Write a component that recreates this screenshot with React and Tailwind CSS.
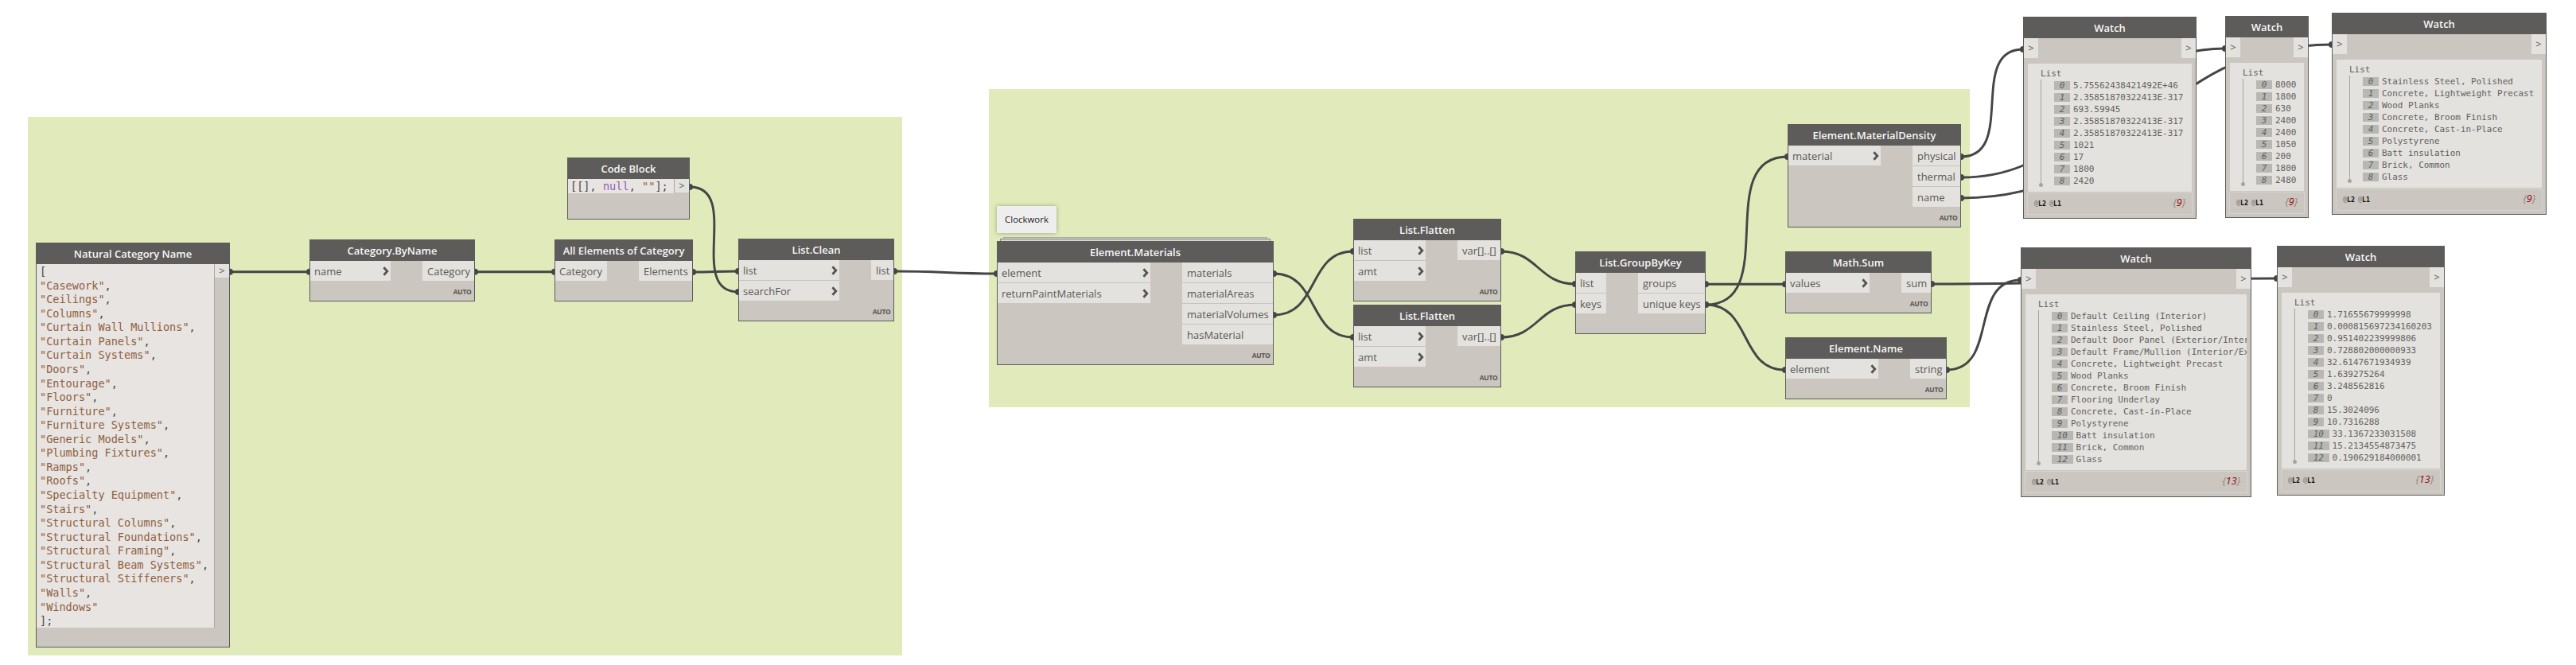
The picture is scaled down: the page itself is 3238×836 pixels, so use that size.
import React from "react";

const categories = [
  "Casework", "Ceilings", "Columns", "Curtain Wall Mullions", "Curtain Panels", "Curtain Systems",
  "Doors", "Entourage", "Floors", "Furniture", "Furniture Systems", "Generic Models",
  "Plumbing Fixtures", "Ramps", "Roofs", "Specialty Equipment", "Stairs", "Structural Columns",
  "Structural Foundations", "Structural Framing", "Structural Beam Systems",
  "Structural Stiffeners", "Walls", "Windows",
];

// x1, y1 (output port) -> x2, y2 (input port)
const wires = [
  [289, 341.8, 389, 341.8],
  [597, 341.8, 697, 341.8],
  [871, 342, 928, 341],
  [867, 235, 928, 367],
  [1124, 341, 1253, 344],
  [1601, 344, 1701, 424],
  [1601, 396, 1701, 316],
  [1887, 316, 1980, 357],
  [1887, 424, 1980, 383],
  [2144, 357.2, 2244, 357.2],
  [2144, 383, 2247, 197],
  [2144, 383, 2244, 465],
  [2465, 197, 2543, 62],
  [2465, 223, 2797, 61],
  [2465, 249, 2931, 56],
  [2428, 357, 2862, 350],
  [2447, 465, 2540, 352],
];

const nodes = [
  { title: "Category.ByName", pos: "left-[389px] top-[301px] w-[208px] h-[78px]", inputs: ["name"], outputs: ["Category"], inW: "w-[101px]", outW: "w-[65px]", chevrons: true, auto: true },
  { title: "All Elements of Category", pos: "left-[697px] top-[301px] w-[174px] h-[78px]", inputs: ["Category"], outputs: ["Elements"], inW: "w-[65px]", outW: "w-[67px]" },
  { title: "List.Clean", pos: "left-[928px] top-[300px] w-[196px] h-[104px]", inputs: ["list", "searchFor"], outputs: ["list"], inW: "w-[126px]", outW: "w-[28px]", chevrons: true, auto: true },
  { title: "Element.Materials", pos: "left-[1253px] top-[303px] w-[348px] h-[156px]", inputs: ["element", "returnPaintMaterials"], outputs: ["materials", "materialAreas", "materialVolumes", "hasMaterial"], inW: "w-[192px]", outW: "w-[114px]", chevrons: true, auto: true },
  { title: "List.Flatten", pos: "left-[1701px] top-[275px] w-[186px] h-[104px]", inputs: ["list", "amt"], outputs: ["var[]..[]"], inW: "w-[90px]", outW: "w-[54px]", chevrons: true, auto: true },
  { title: "List.Flatten", pos: "left-[1701px] top-[383px] w-[186px] h-[104px]", inputs: ["list", "amt"], outputs: ["var[]..[]"], inW: "w-[90px]", outW: "w-[54px]", chevrons: true, auto: true },
  { title: "List.GroupByKey", pos: "left-[1980px] top-[316px] w-[164px] h-[104px]", inputs: ["list", "keys"], outputs: ["groups", "unique keys"], inW: "w-[38px]", outW: "w-[84px]" },
  { title: "Element.MaterialDensity", pos: "left-[2247px] top-[156px] w-[218px] h-[130px]", inputs: ["material"], outputs: ["physical", "thermal", "name"], inW: "w-[116px]", outW: "w-[60px]", chevrons: true, auto: true },
  { title: "Math.Sum", pos: "left-[2244px] top-[316px] w-[184px] h-[78px]", inputs: ["values"], outputs: ["sum"], inW: "w-[105px]", outW: "w-[37px]", chevrons: true, auto: true },
  { title: "Element.Name", pos: "left-[2244px] top-[424px] w-[203px] h-[78px]", inputs: ["element"], outputs: ["string"], inW: "w-[116px]", outW: "w-[45px]", chevrons: true, auto: true },
];

const watches = [
  {
    pos: "left-[2543px] top-[21px] w-[218px]",
    items: ["5.75562438421492E+46", "2.35851870322413E-317", "693.59945", "2.35851870322413E-317", "2.35851870322413E-317", "1021", "17", "1800", "2420"],
  },
  {
    pos: "left-[2797px] top-[20px] w-[105px]",
    items: ["8000", "1800", "630", "2400", "2400", "1050", "200", "1800", "2480"],
  },
  {
    pos: "left-[2931px] top-[16px] w-[270px]",
    items: ["Stainless Steel, Polished", "Concrete, Lightweight Precast", "Wood Planks", "Concrete, Broom Finish", "Concrete, Cast-in-Place", "Polystyrene", "Batt insulation", "Brick, Common", "Glass"],
  },
  {
    pos: "left-[2540px] top-[311px] w-[290px]",
    items: ["Default Ceiling (Interior)", "Stainless Steel, Polished", "Default Door Panel (Exterior/Interior)", "Default Frame/Mullion (Interior/Exterior)", "Concrete, Lightweight Precast", "Wood Planks", "Concrete, Broom Finish", "Flooring Underlay", "Concrete, Cast-in-Place", "Polystyrene", "Batt insulation", "Brick, Common", "Glass"],
  },
  {
    pos: "left-[2862px] top-[309px] w-[211px]",
    items: ["1.71655679999998", "0.000815697234160203", "0.951402239999806", "0.728802000000933", "32.6147671934939", "1.639275264", "3.248562816", "0", "15.3024096", "10.7316288", "33.1367233031508", "15.2134554873475", "0.190629184000001"],
  },
];

function wirePath([x1, y1, x2, y2]) {
  const offset = 0.45 * Math.hypot(x2 - x1, y2 - y1);
  return `M${x1} ${y1} C${x1 + offset} ${y1} ${x2 - offset} ${y2} ${x2} ${y2}`;
}

function Wires() {
  return (
    <svg className="absolute inset-0" width="3238" height="836" fill="none">
      {wires.map((w, i) => (
        <g key={i}>
          <path d={wirePath(w)} stroke="#454545" strokeWidth="2.9" />
          <circle cx={w[0]} cy={w[1]} r="4" fill="#454545" />
          <circle cx={w[2]} cy={w[3]} r="4" fill="#454545" />
        </g>
      ))}
    </svg>
  );
}

function Header({ children }) {
  return (
    <div className="flex h-[26px] shrink-0 items-center justify-center bg-[#5e5c5a] text-[13px] leading-none font-semibold whitespace-nowrap text-[#f7f7f7]">
      {children}
    </div>
  );
}

function Frame({ className, children }) {
  return (
    <div className={`absolute flex flex-col border border-[#5e5c5a] bg-[#cbc6bf] ${className}`}>
      {children}
    </div>
  );
}

function Chevron() {
  return (
    <svg className="mr-0.5 shrink-0" width="8" height="12" viewBox="0 0 8 12" fill="none">
      <path d="M1.4 1.3 L5.8 6 L1.4 10.7" stroke="#555351" strokeWidth="2.8" />
    </svg>
  );
}

function Port({ label, chevron, output }) {
  return (
    <div className={`flex h-[25px] items-center justify-between bg-[#e4e2de] ${output ? "pl-1.5" : "pl-[5px]"}`}>
      <span className="pt-px text-[13px] leading-[19px] whitespace-nowrap text-[#5a5856]">{label}</span>
      {chevron && <Chevron />}
    </div>
  );
}

function Node({ title, pos, inputs, outputs, inW, outW, chevrons, auto }) {
  return (
    <Frame className={pos}>
      <Header>{title}</Header>
      <div className="flex flex-1 items-start justify-between">
        <div className={`flex flex-col gap-px bg-[#c6c4bf] ${inW}`}>
          {inputs.map((p) => <Port key={p} label={p} chevron={chevrons} />)}
        </div>
        <div className={`flex flex-col gap-px bg-[#c6c4bf] ${outW}`}>
          {outputs.map((p) => <Port key={p} label={p} output />)}
        </div>
      </div>
      {auto && (
        <div className="pr-[3.5px] pb-[5px] text-right text-[8.5px] leading-[12px] font-bold tracking-[-0.3px] text-[#575553]">AUTO</div>
      )}
    </Frame>
  );
}

function Arrow() {
  return <span className="text-[13px] leading-none">&gt;</span>;
}

function CodeOutput() {
  return (
    <div className="flex h-[17px] w-[18px] items-center justify-center bg-[#e4e2de] text-[#5a5856]">
      <Arrow />
    </div>
  );
}

function WatchPort() {
  return (
    <div className="flex h-[25px] w-[18px] items-center justify-center bg-[#e4e2de] text-[#5a5856]">
      <Arrow />
    </div>
  );
}

function Watch({ pos, items }) {
  return (
    <Frame className={pos}>
      <Header>Watch</Header>
      <div className="flex justify-between">
        <WatchPort />
        <WatchPort />
      </div>
      <div className="mx-[5px] mt-[7px] overflow-hidden bg-[#e4e2de] pt-[5px] pb-1.5 pl-4 font-['DejaVu_Sans_Mono','Liberation_Mono',monospace] text-[10.96px] leading-[15px] whitespace-nowrap text-[#62605e]">
        <div>List</div>
        <div className="flex">
          <svg className="-ml-0.5 w-[5px] shrink-0" viewBox={`0 0 5 ${items.length * 15}`} height={items.length * 15}>
            <path d={`M2.5 0V${items.length * 15 - 3}`} stroke="#a5a4a1" strokeWidth="1" />
            <circle cx="2.5" cy={items.length * 15 - 2.5} r="2.5" fill="#a5a4a1" />
          </svg>
          <div className="ml-[14px]">
            {items.map((item, i) => (
              <div key={i} className="flex h-[15px] items-center gap-1">
                <span className="h-[11px] bg-[#b8b7b3] px-[6.7px] leading-[12px] italic">{i}</span>
                <span>{item}</span>
              </div>
            ))}
          </div>
        </div>
      </div>
      <div className="mx-1 mt-px mb-1 flex h-[28px] items-center justify-between border border-[#d5d4d1] px-2">
        <div className="flex gap-1 font-['DejaVu_Sans_Mono',monospace] text-[8.3px] leading-none font-bold text-[#111]">
          <span><span className="text-[#8a8886]">@</span>L2</span>
          <span><span className="text-[#8a8886]">@</span>L1</span>
        </div>
        <div className="pb-0.5 text-[12.5px] leading-none text-[#8a8886] italic">
          {"{"}<span className="text-[#980000]">{items.length}</span>{"}"}
        </div>
      </div>
    </Frame>
  );
}

function CategoryCode() {
  return (
    <Frame className="top-[305px] left-[45px] h-[509px] w-[244px]">
      <Header>Natural Category Name</Header>
      <div className="flex items-start">
        <div className="h-[457px] w-[224px] border-r border-[#a9a6a3] bg-[#e8e4e1] pt-px pl-1 font-['DejaVu_Sans_Mono','Liberation_Mono',monospace] text-[13.55px] leading-[17.56px] whitespace-pre text-[#454545]">
          <div>[</div>
          {categories.map((c, i) => (
            <div key={c}>
              <span className="text-[#8f6040]">"{c}"</span>{i < categories.length - 1 && ","}
            </div>
          ))}
          <div>];</div>
        </div>
        <CodeOutput />
      </div>
    </Frame>
  );
}

function CodeBlock() {
  return (
    <Frame className="top-[198px] left-[713px] h-[78px] w-[154px]">
      <Header>Code Block</Header>
      <div className="flex items-start">
        <div className="h-[18px] w-[134px] border-r border-[#a9a6a3] bg-[#e8e4e1] pl-[3px] font-['DejaVu_Sans_Mono','Liberation_Mono',monospace] text-[13.6px] leading-[18px] whitespace-pre text-[#454545]">
          [[], <span className="text-[#8f5fb5]">null</span>, <span className="text-[#8f6040]">""</span>];
        </div>
        <CodeOutput />
      </div>
    </Frame>
  );
}

export default function App() {
  return (
    <div className="relative h-[836px] w-[3238px] overflow-hidden bg-white font-['Open_Sans','Noto_Sans',sans-serif]">
      <div className="absolute top-[147px] left-[35px] h-[677px] w-[1099px] bg-[#e1eabb]" />
      <div className="absolute top-[112px] left-[1243px] h-[400px] w-[1233px] bg-[#e1eabb]" />
      <Wires />
      <CategoryCode />
      <CodeBlock />
      <div className="absolute top-[259px] left-[1253px] flex h-[34px] w-[75px] items-center justify-center bg-[#eeeeee] text-[11.45px] text-[#222] shadow-[0_0_5px_rgba(80,80,40,0.45)]">
        Clockwork
      </div>
      <div className="absolute top-[298px] left-[1261px] h-[10px] w-[332px] border border-[#a9a9a4] bg-[#d6d6d0]" />
      <div className="absolute top-[300px] left-[1257px] h-[10px] w-[340px] border border-[#858580] bg-[#d6d6d0]" />
      {nodes.map((n, i) => <Node key={i} {...n} />)}
      {watches.map((w, i) => <Watch key={i} {...w} />)}
    </div>
  );
}
